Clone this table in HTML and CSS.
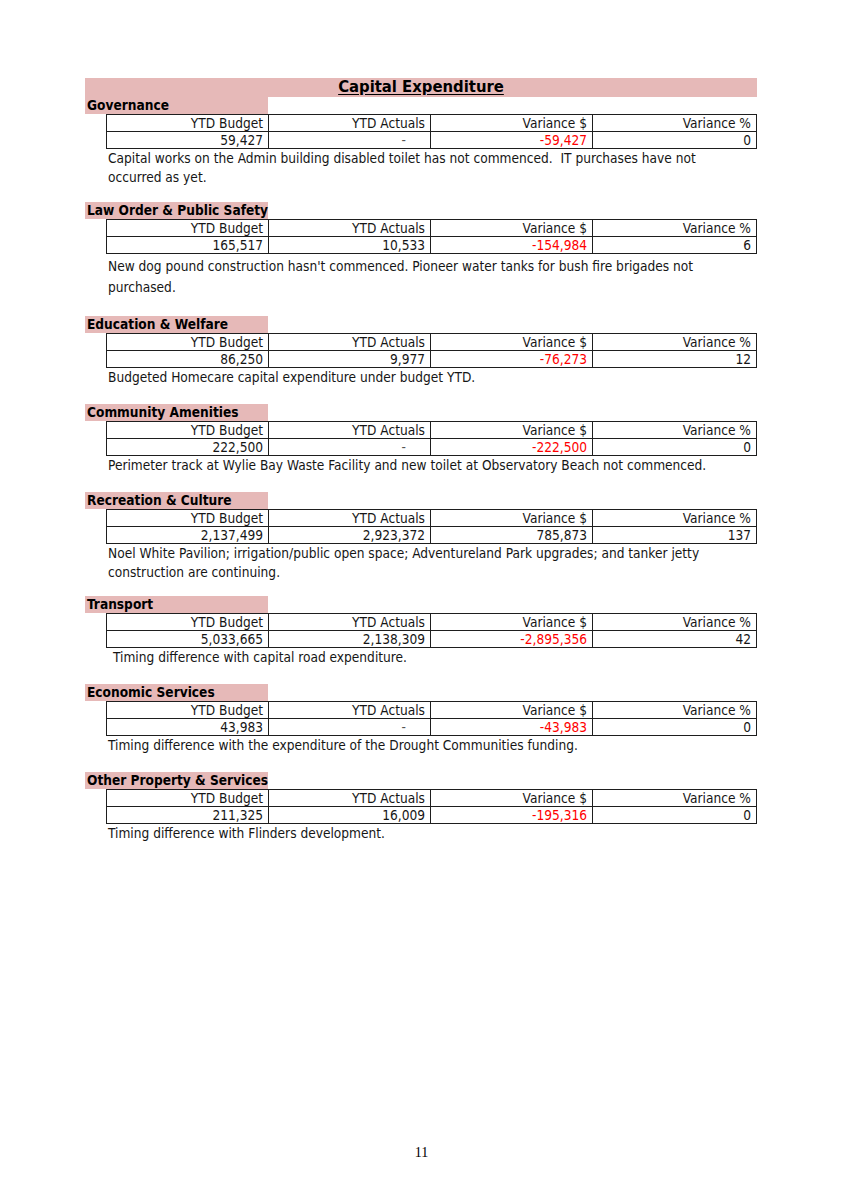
FILE: index.html
```html
<!DOCTYPE html>
<html>
<head>
<meta charset="utf-8">
<link rel="stylesheet" href="styles.css">
</head>
<body>
<div class="page">
  <div class="sheet">
    <div class="title-bar"><span class="title">Capital Expenditure</span></div>

    <section class="sec s-gov">
      <div class="label">Governance</div>
      <table class="fig">
        <colgroup><col class="c"><col class="c"><col class="c"><col class="c-last"></colgroup>
        <tr><td>YTD Budget</td><td>YTD Actuals</td><td>Variance $</td><td>Variance %</td></tr>
        <tr><td>59,427</td><td><span class="dash">-</span></td><td class="neg">-59,427</td><td>0</td></tr>
      </table>
      <p class="note">Capital works on the Admin building disabled toilet has not commenced.&nbsp; IT purchases have not occurred as yet.</p>
    </section>

    <section class="sec s-law">
      <div class="label">Law Order &amp; Public Safety</div>
      <table class="fig">
        <colgroup><col class="c"><col class="c"><col class="c"><col class="c-last"></colgroup>
        <tr><td>YTD Budget</td><td>YTD Actuals</td><td>Variance $</td><td>Variance %</td></tr>
        <tr><td>165,517</td><td>10,533</td><td class="neg">-154,984</td><td>6</td></tr>
      </table>
      <p class="note wide">New dog pound construction hasn't commenced. Pioneer water tanks for bush fire brigades not purchased.</p>
    </section>

    <section class="sec s-edu">
      <div class="label">Education &amp; Welfare</div>
      <table class="fig">
        <colgroup><col class="c"><col class="c"><col class="c"><col class="c-last"></colgroup>
        <tr><td>YTD Budget</td><td>YTD Actuals</td><td>Variance $</td><td>Variance %</td></tr>
        <tr><td>86,250</td><td>9,977</td><td class="neg">-76,273</td><td>12</td></tr>
      </table>
      <p class="note">Budgeted Homecare capital expenditure under budget YTD.</p>
    </section>

    <section class="sec s-com">
      <div class="label">Community Amenities</div>
      <table class="fig">
        <colgroup><col class="c"><col class="c"><col class="c"><col class="c-last"></colgroup>
        <tr><td>YTD Budget</td><td>YTD Actuals</td><td>Variance $</td><td>Variance %</td></tr>
        <tr><td>222,500</td><td><span class="dash">-</span></td><td class="neg">-222,500</td><td>0</td></tr>
      </table>
      <p class="note">Perimeter track at Wylie Bay Waste Facility and new toilet at Observatory Beach not commenced.</p>
    </section>

    <section class="sec s-rec">
      <div class="label">Recreation &amp; Culture</div>
      <table class="fig">
        <colgroup><col class="c"><col class="c"><col class="c"><col class="c-last"></colgroup>
        <tr><td>YTD Budget</td><td>YTD Actuals</td><td>Variance $</td><td>Variance %</td></tr>
        <tr><td>2,137,499</td><td>2,923,372</td><td>785,873</td><td>137</td></tr>
      </table>
      <p class="note">Noel White Pavilion; irrigation/public open space; Adventureland Park upgrades; and tanker jetty construction are continuing.</p>
    </section>

    <section class="sec s-tra">
      <div class="label">Transport</div>
      <table class="fig">
        <colgroup><col class="c"><col class="c"><col class="c"><col class="c-last"></colgroup>
        <tr><td>YTD Budget</td><td>YTD Actuals</td><td>Variance $</td><td>Variance %</td></tr>
        <tr><td>5,033,665</td><td>2,138,309</td><td class="neg">-2,895,356</td><td>42</td></tr>
      </table>
      <p class="note indent">Timing difference with capital road expenditure.</p>
    </section>

    <section class="sec s-eco">
      <div class="label">Economic Services</div>
      <table class="fig">
        <colgroup><col class="c"><col class="c"><col class="c"><col class="c-last"></colgroup>
        <tr><td>YTD Budget</td><td>YTD Actuals</td><td>Variance $</td><td>Variance %</td></tr>
        <tr><td>43,983</td><td><span class="dash">-</span></td><td class="neg">-43,983</td><td>0</td></tr>
      </table>
      <p class="note">Timing difference with the expenditure of the Drought Communities funding.</p>
    </section>

    <section class="sec s-oth">
      <div class="label">Other Property &amp; Services</div>
      <table class="fig">
        <colgroup><col class="c"><col class="c"><col class="c"><col class="c-last"></colgroup>
        <tr><td>YTD Budget</td><td>YTD Actuals</td><td>Variance $</td><td>Variance %</td></tr>
        <tr><td>211,325</td><td>16,009</td><td class="neg">-195,316</td><td>0</td></tr>
      </table>
      <p class="note">Timing difference with Flinders development.</p>
    </section>
  </div>
  <div class="footer">11</div>
</div>
</body>
</html>
```

FILE: styles.css
```css
html, body {
  margin: 0;
  padding: 0;
  background: #ffffff;
}

.page {
  width: 843px;
  height: 1193px;
  display: flex;
  flex-direction: column;
  box-sizing: border-box;
  padding-top: 78px;
  font-family: "DejaVu Sans Condensed", "DejaVu Sans", sans-serif;
  font-stretch: semi-condensed;
  font-size: 13.6px;
  color: #161616;
}

.sheet {
  margin-left: 85px;
  width: 672px;
}

.title-bar {
  background: #e6b9b8;
  height: 19px;
  display: flex;
  justify-content: center;
  align-items: center;
}

.title {
  font-weight: bold;
  font-size: 16.5px;
  text-decoration: underline;
  text-underline-offset: 2px;
  color: #000;
  position: relative;
  top: -1px;
}

.label {
  background: #e6b9b8;
  width: 183px;
  height: 17px;
  line-height: 17px;
  font-weight: bold;
  color: #000;
  padding-left: 2px;
  box-sizing: border-box;
  white-space: nowrap;
}

.fig {
  margin-left: 21px;
  width: 651px;
  border-collapse: collapse;
  table-layout: fixed;
}

.fig col.c {
  width: 162px;
}

.fig td {
  border: 1.6px solid #1e1e1e;
  height: 16px;
  line-height: 16px;
  padding: 0 5px 0 2px;
  text-align: right;
  white-space: nowrap;
}

.fig td.neg {
  color: #ff0000;
}

.dash {
  display: inline-block;
  padding-right: 19px;
  color: #555;
}

.note {
  margin: 0 0 0 23px;
  width: 620px;
  line-height: 19px;
  padding-bottom: 17px;
}

.s-gov .note {
  padding-bottom: 15px;
}

.note.wide {
  line-height: 21px;
  padding-top: 2px;
  padding-bottom: 18px;
}

.note.indent {
  padding-left: 5px;
}

.s-rec .note {
  padding-bottom: 14px;
}

.footer {
  margin-top: auto;
  padding-bottom: 32px;
  text-align: center;
  font-family: "Liberation Serif", serif;
  font-size: 14px;
  color: #000;
}
```
